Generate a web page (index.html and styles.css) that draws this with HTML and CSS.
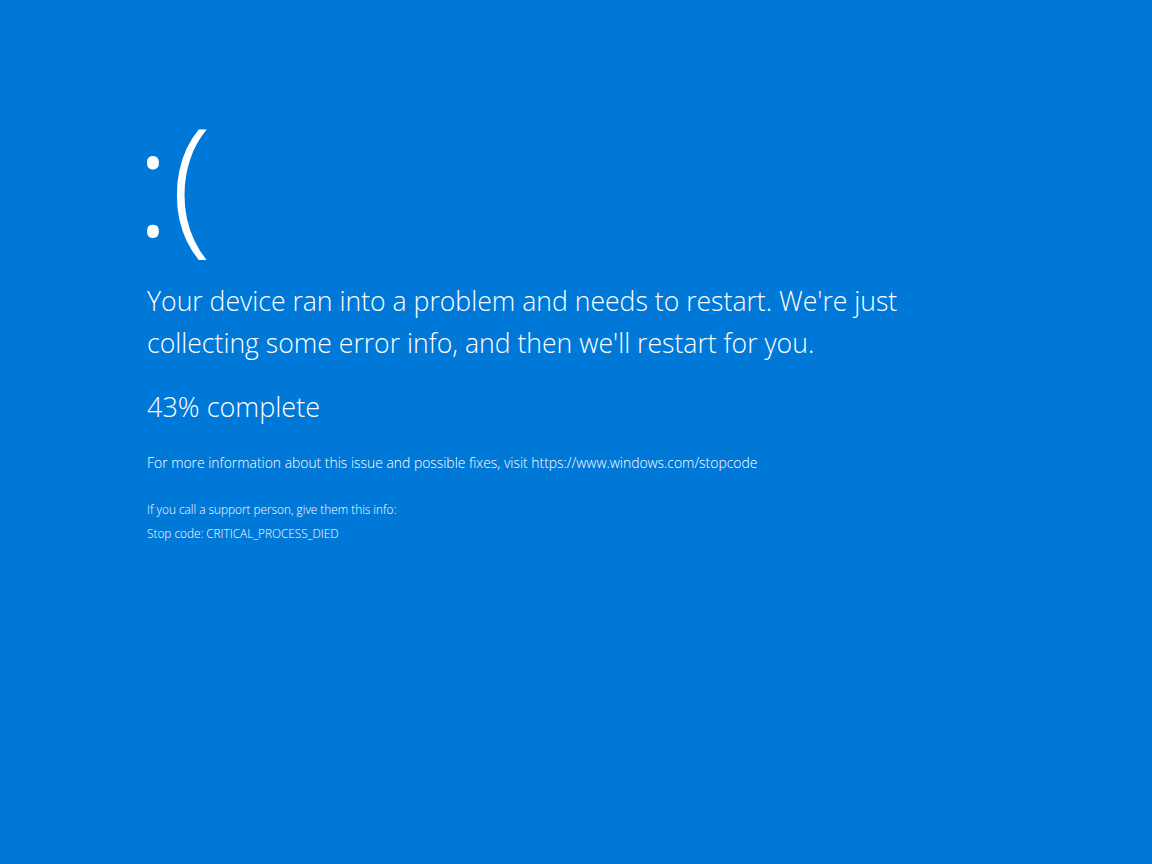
FILE: index.html
```html
<!DOCTYPE html>
<html lang="en">
<head>
    <meta charset="UTF-8">
    <title>Stop code</title>
    <link rel="stylesheet" href="styles.css">
</head>
<body>
    <div class="screen">
        <div class="face">:(</div>
        <p class="message">Your device ran into a problem and needs to restart. We're just collecting some error info, and then we'll restart for you.</p>
        <p class="progress">43% complete</p>
        <p class="more">For more information about this issue and possible fixes, visit https://www.windows.com/stopcode</p>
        <div class="support">
            <p>If you call a support person, give them this info:</p>
            <p>Stop code: CRITICAL_PROCESS_DIED</p>
        </div>
    </div>
</body>
</html>
```

FILE: styles.css
```css
html, body {
    margin: 0;
    height: 100%;
}

body {
    background: #0078d7;
    color: #ffffff;
    font-family: 'Open Sans', 'Noto Sans', sans-serif;
    font-weight: 300;
}

.screen {
    padding: 93px 0 0 147px;
}

.face {
    font-size: 150px;
    line-height: 170px;
    margin-left: -12px;
}

.message {
    width: 800px;
    margin: 17px 0 0;
    font-size: 26.6px;
    line-height: 42px;
}

.progress {
    margin: 23px 0 0;
    font-size: 27px;
    line-height: 40px;
}

.more {
    margin: 26px 0 0;
    font-size: 13.9px;
    line-height: 20px;
}

.support {
    margin-top: 24px;
}

.support p {
    margin: 0;
    font-size: 11.8px;
    line-height: 24px;
}
```
